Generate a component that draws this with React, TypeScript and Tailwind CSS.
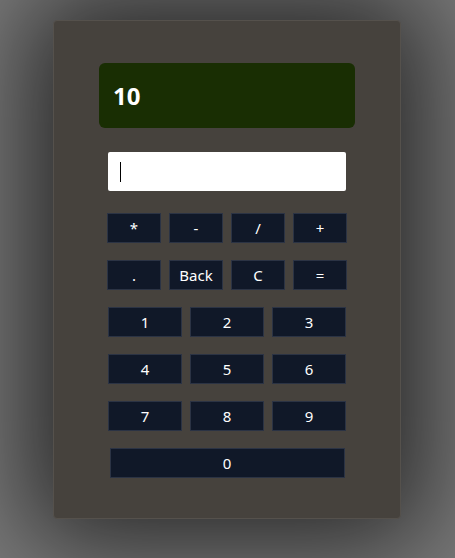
import React, { useState } from "react";

const App = () => {
  const [value] = useState("10");

  const ops = ["*", "-", "/", "+"];
  const ops2 = [".", "Back", "C", "="];
  const digits = [
    ["1", "2", "3"],
    ["4", "5", "6"],
    ["7", "8", "9"],
  ];

  return (
    <div
      className="w-full h-[558px] bg-[#7c7c7c] overflow-hidden pt-5"
      style={{ fontFamily: '"Noto Sans", "Open Sans", sans-serif' }}
    >
      <div className="w-[348px] h-[499px] ml-[53px] bg-[#46423d] border border-[#55514c] rounded-[4px] shadow-[0_0_110px_25px_rgba(0,0,0,0.7)] flex flex-col items-center pt-[42px]">
        {/* Display */}
        <div className="w-[256px] h-[65px] bg-lime-950 rounded-[6px] flex items-center pl-[14px]">
          <span className="text-white text-[24px] font-bold">{value}</span>
        </div>

        {/* Input */}
        <div className="mt-[24px] w-[238px] h-[39px] bg-white rounded-[2px] flex items-center pl-[12px]">
          <div className="w-[1px] h-[20px] bg-black" />
        </div>

        {/* Operators */}
        <div className="mt-[22px] flex gap-[8px]">
          {ops.map((o) => (
            <button
              key={o}
              className="w-[54px] h-[30px] bg-gray-900 border border-[#2b3344] text-white text-[15px] flex items-center justify-center"
            >
              {o}
            </button>
          ))}
        </div>
        <div className="mt-[17px] flex gap-[8px]">
          {ops2.map((o) => (
            <button
              key={o}
              className="w-[54px] h-[30px] bg-gray-900 border border-[#2b3344] text-white text-[15px] flex items-center justify-center"
            >
              {o}
            </button>
          ))}
        </div>

        {/* Digits */}
        {digits.map((row, i) => (
          <div key={i} className="mt-[17px] flex gap-[8px]">
            {row.map((d) => (
              <button
                key={d}
                className="w-[74px] h-[30px] bg-gray-900 border border-[#2b3344] text-white text-[15px] flex items-center justify-center"
              >
                {d}
              </button>
            ))}
          </div>
        ))}
        <div className="mt-[17px] flex">
          <button className="w-[235px] h-[30px] bg-gray-900 border border-[#2b3344] text-white text-[15px] flex items-center justify-center">
            0
          </button>
        </div>
      </div>
    </div>
  );
};

export default App;
